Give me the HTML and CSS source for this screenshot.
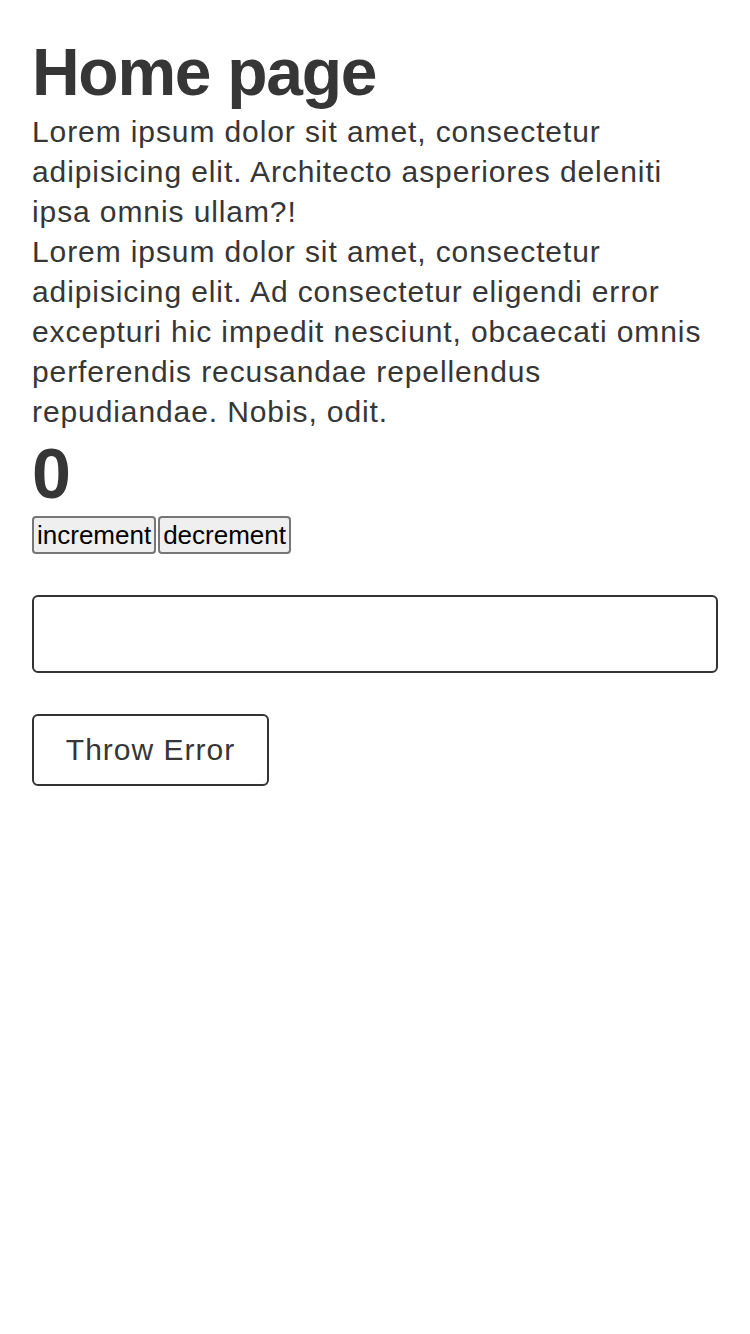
FILE: index.html
```html
<!DOCTYPE html>
<html lang="en">
<head>
<meta charset="utf-8">
<title>Home page</title>
<link rel="stylesheet" href="styles.css">
</head>
<body>
<main class="page">
  <h1 class="title">Home page</h1>
  <p class="text">Lorem ipsum dolor sit amet, consectetur adipisicing elit. Architecto asperiores deleniti ipsa omnis ullam?!</p>
  <p class="text">Lorem ipsum dolor sit amet, consectetur adipisicing elit. Ad consectetur eligendi error excepturi hic impedit nesciunt, obcaecati omnis perferendis recusandae repellendus repudiandae. Nobis, odit.</p>
  <h2 class="count">0</h2>
  <div class="counter"><button class="btn-native">increment</button><button class="btn-native">decrement</button></div>
  <input class="field" type="text">
  <button class="btn-error">Throw Error</button>
</main>
</body>
</html>
```
FILE: styles.css
```css
html, body {
  margin: 0;
  padding: 0;
  background: #fff;
}
.page {
  padding: 34px 32px 0 32px;
  font-family: "Liberation Sans", Arial, sans-serif;
  color: #363636;
  display: flex;
  flex-direction: column;
  align-items: flex-start;
}
.title {
  margin: 0 0 2px 0;
  font-size: 66px;
  line-height: 76px;
  font-weight: 700;
  letter-spacing: -1.3px;
}
.text {
  margin: 0;
  width: 686px;
  font-size: 30px;
  line-height: 40px;
  letter-spacing: 0.9px;
}
.count {
  margin: 0;
  font-size: 70px;
  line-height: 84px;
  font-weight: 700;
}
.counter {
  display: flex;
  gap: 2px;
}
.btn-native {
  font-family: "Liberation Sans", Arial, sans-serif;
  font-size: 26px;
  line-height: 32px;
  color: #000;
  background: #efefef;
  border: 2px solid #767676;
  border-radius: 4px;
  padding: 1px 3px;
  margin: 0;
}
.field {
  margin-top: 41px;
  width: 686px;
  height: 78px;
  box-sizing: border-box;
  border: 2px solid #333;
  border-radius: 6px;
  font-size: 28px;
  padding: 0 16px;
}
.btn-error {
  margin-top: 41px;
  width: 237px;
  height: 72px;
  box-sizing: border-box;
  border: 2px solid #333;
  border-radius: 6px;
  background: #fff;
  color: #363636;
  font-family: "Liberation Sans", Arial, sans-serif;
  font-size: 30px;
  letter-spacing: 1px;
  padding: 0;
}
```
